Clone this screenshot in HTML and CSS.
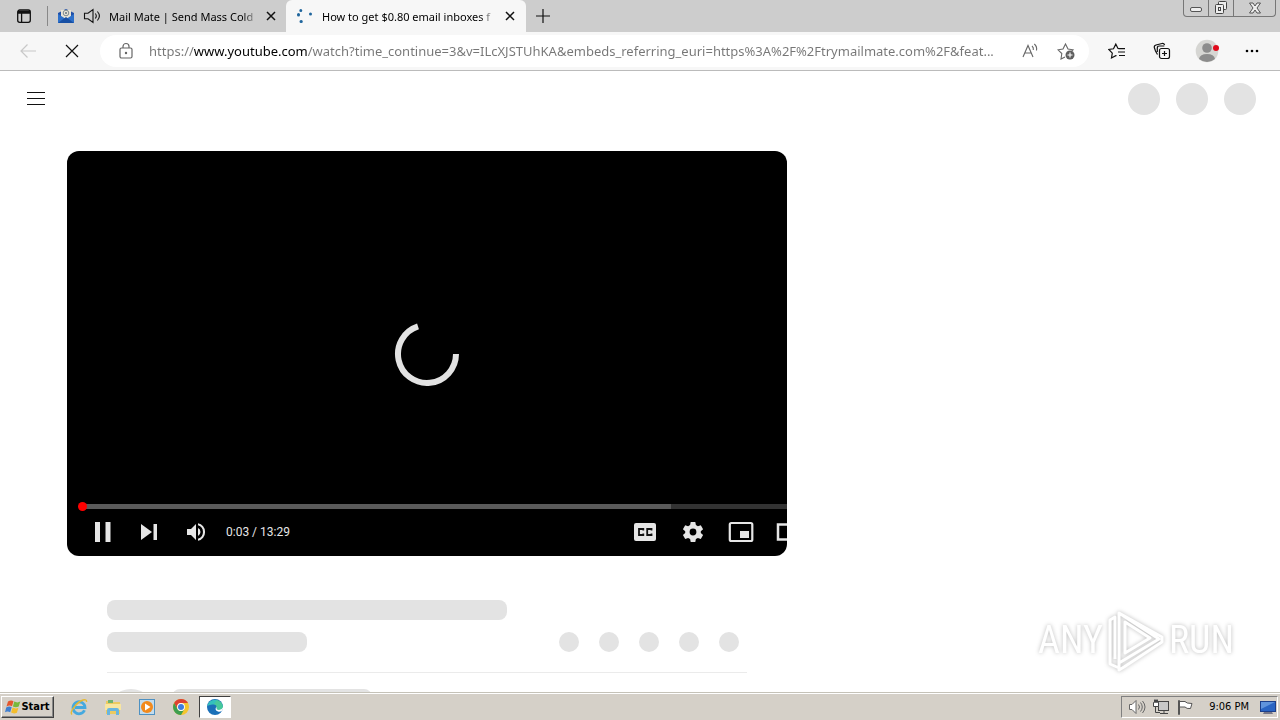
FILE: index.html
```
<!DOCTYPE html>
<html lang="en">

<head>
    <meta charset="UTF-8">
    <meta name="viewport" content="width=device-width, initial-scale=1.0">
    <title>How to get $0.80 email inboxes</title>
    <link rel="stylesheet" href="styles.css">
</head>

<body>
    <!-- Tab strip -->
    <header class="tabstrip">
        <button class="tab-actions" aria-label="Tab actions">
            <svg width="16" height="16" viewBox="0 0 16 16" fill="none" stroke="#111" stroke-width="1.3"><rect x="1.7" y="2" width="12.6" height="12.3" rx="2"/><path d="M2 3.5h12M2 5h12M5.6 5v9"/></svg>
        </button>
        <div class="tab">
            <svg width="18" height="18" viewBox="0 0 18 18"><path d="M1 6 9 2l8 4v10H1z" fill="#1f4fa8"/><path d="M4 3h10v8l-5 3-5-3z" fill="#e8e4d6"/><circle cx="9" cy="6" r="2.8" fill="none" stroke="#7c8990"/><circle cx="9" cy="6" r="1" fill="#64737c"/><path d="M1 7l8 5 8-5v9H1z" fill="#2d70ca"/><path d="M1 16l8-6 8 6z" fill="#174fa4"/></svg>
            <svg width="18" height="18" viewBox="0 0 18 18" fill="none" stroke="#111" stroke-width="1.1"><path d="M1.5 6.3H5L10 2.5v13L5 11.7H1.5zM12.3 6.5q2 2.5 0 5M14.4 4.5q4 4.500 0 9"/></svg>
            <span class="tab-title">Mail Mate | Send Mass Cold</span>
            <button class="tab-close" aria-label="Close tab"><svg width="10" height="10" viewBox="0 0 10 10" stroke="#111" stroke-width="1.5"><path d="M1 1l8 8M9 1L1 9"/></svg></button>
        </div>
        <div class="tab active">
            <svg width="18" height="18" viewBox="0 0 18 18" fill="none" stroke="#20669d" stroke-width="3" stroke-linecap="round"><path d="M4.800 3.500v.1M2.500 7.500v.6M5 14.500h.3M14.500 7v.1"/></svg>
            <span class="tab-title">How to get $0.80 email inboxes f</span>
            <button class="tab-close" aria-label="Close tab"><svg width="10" height="10" viewBox="0 0 10 10" stroke="#111" stroke-width="1.5"><path d="M1 1l8 8M9 1L1 9"/></svg></button>
        </div>
        <button class="new-tab" aria-label="New tab"><svg width="14" height="14" viewBox="0 0 14 14" stroke="#111" stroke-width="1.200"><path d="M7 0v14M0 7h14"/></svg></button>
        <div class="window-buttons">
            <button aria-label="Minimize"><svg width="14" height="14" viewBox="0 0 14 14" fill="#eee" stroke="#555"><rect x="1.500" y="6.500" width="11" height="4" rx="1.500"/></svg></button>
            <button aria-label="Restore"><svg width="14" height="14" viewBox="0 0 14 14" fill="#eee" stroke="#444"><rect x="4.500" y=".5" width="8" height="8" rx="1"/><rect x="1.500" y="3.500" width="8" height="9" rx="1"/><rect x="4.500" y="6.500" width="2" height="3"/></svg></button>
            <button class="window-close" aria-label="Close"><svg width="14" height="14" viewBox="0 0 14 14" fill="#eee" stroke="#555"><path d="M1.500 2h3.500l2 3 2-3h3.500L9 7l3.500 5H9L7 9l-2 3H1.500L5 7z"/></svg></button>
        </div>
    </header>

    <!-- Toolbar -->
    <nav class="toolbar">
        <button class="nav-button" aria-label="Back"><svg width="18" height="18" viewBox="0 0 18 18" fill="none" stroke="#c8c8c8" stroke-width="1.200"><path d="M17 9H2M8.500 2.500L2 9l6.500 6.500"/></svg></button>
        <button class="nav-button" aria-label="Stop"><svg width="14" height="14" viewBox="0 0 14 14" stroke="#111" stroke-width="1.200"><path d="M1 1l12 12M13 1L1 13"/></svg></button>
        <div class="address">
            <svg width="16" height="18" viewBox="0 0 16 18" fill="none" stroke="#666" stroke-width="1.200"><rect x="2" y="6" width="12" height="10" rx="1.500"/><path d="M5 6V4.500a3 3 0 0 1 6 0V6"/><circle cx="8" cy="11" r=".6" fill="#666"/></svg>
            <input class="url" type="text" aria-label="Address" value="https://www.youtube.com/watch?time_continue=3&amp;v=ILcXJSTUhKA&amp;embeds_referring_euri=https%3A%2F%2Ftrymailmate.com%2F&amp;feat...">
            <button class="icon-button" aria-label="Read aloud"><svg width="18" height="18" viewBox="0 0 18 18" fill="none" stroke="#666" stroke-width="1.100"><path d="M2 15L7 3.500 12 15M3.800 11h6.400M11 4q1.800 1.500 1.300 4M13.300 2q3 2.500 2.200 6.500"/></svg></button>
            <button class="icon-button" aria-label="Add to favorites"><svg width="18" height="18" viewBox="0 0 18 18" fill="none" stroke="#666" stroke-width="1.100"><path d="M8 15l-4 2 .8-5.500L1 7.800l5-.7L8.500 2l2.500 5.100 5 .7-1.500 1.500"/><circle cx="13" cy="13" r="4.500" fill="#5f5f5f" stroke="none"/><path d="M13 10.500v5M10.500 13h5" stroke="#fff"/></svg></button>
        </div>
        <div class="toolbar-actions">
            <button class="icon-button" aria-label="Favorites"><svg width="18" height="18" viewBox="0 0 18 18" fill="none" stroke="#111" stroke-width="1.200"><path d="M10.500 6.500H10L7.800 2.200 5.500 6.800l-4.700.7 3.500 3.700L3.500 16l4.300-2.300h.7M10.500 6.600H17M10 10h7M11 13.500h6"/></svg></button>
            <button class="icon-button" aria-label="Collections"><svg width="18" height="18" viewBox="0 0 18 18" fill="none" stroke="#111" stroke-width="1.200"><rect x="6.500" y="6.500" width="10" height="10" rx="2"/><path d="M11.500 9v5M9 11.500h5M4.500 12.500L2.500 9 1.300 5.500Q1 3.500 3 3l6-1.500q2-.3 2.600 1.500M4.300 10V6q0-2 2-2h5"/></svg></button>
            <button class="icon-button" aria-label="Profile"><svg width="24" height="24" viewBox="0 0 24 24"><circle cx="12" cy="12" r="11.300" fill="#d6d6d3"/><circle cx="12" cy="9" r="4.800" fill="#8c8c8c"/><path d="M4 20q1-5 8-5t8 5q-8 6-16 0z" fill="#8c8c8c"/><circle cx="21" cy="9" r="3" fill="#e00b1c"/></svg></button>
            <button class="icon-button" aria-label="Settings and more"><svg width="16" height="16" viewBox="0 0 16 16"><circle cx="3" cy="8" r="1.300"/><circle cx="8" cy="8" r="1.300"/><circle cx="13" cy="8" r="1.300"/></svg></button>
        </div>
    </nav>

    <!-- Page -->
    <main class="page">
        <div class="masthead">
            <button class="guide" aria-label="Guide"><svg width="18" height="14" viewBox="0 0 18 14" stroke="#111"><path d="M0 .5h18M0 6.500h18M0 12.500h18"/></svg></button>
            <div class="masthead-skeleton"><i></i><i></i><i></i></div>
        </div>

        <section class="watch">
            <div class="player">
                <div class="stage">
                    <svg width="66" height="66" viewBox="0 0 66 66" fill="none" stroke="#e2e2e2" stroke-width="6"><path d="M62 33A29 29 0 1 1 24 5.400"/></svg>
                </div>
                <input class="progress" type="range" min="0" max="809" value="3" aria-label="Seek">
                <div class="controls">
                    <button aria-label="Pause"><svg width="24" height="24" viewBox="0 0 24 24" fill="#e6e6e6"><path d="M4 2h5v20H4zM14.500 2h5v20h-5z"/></svg></button>
                    <button aria-label="Next"><svg width="24" height="24" viewBox="0 0 24 24" fill="#e6e6e6"><path d="M3 4l11 8-11 8zM15.500 4H19v16h-3.500z"/></svg></button>
                    <button aria-label="Mute"><svg width="24" height="24" viewBox="0 0 24 24"><path d="M2 9v6h4l5 5V4L6 9zM15.500 12A4.500 4.500 0 0 0 13 8v8a4.500 4.500 0 0 0 2.500-4zM13 3.200v2.100a7 7 0 0 1 0 13.400v2.100a9 9 0 0 0 0-17.600z" fill="#e6e6e6"/></svg></button>
                    <span class="time">0:03 / 13:29</span>
                    <div class="controls-right">
                        <button aria-label="Subtitles"><svg width="24" height="24" viewBox="0 0 24 24"><rect x="1" y="3" width="22" height="18" rx="2" fill="#e6e6e6"/><path d="M10.300 10.500V9H6v6h4.300v-1.500M18.500 10.500V9h-4.300v6h4.300v-1.500" fill="none" stroke="#111" stroke-width="1.800"/></svg></button>
                        <button aria-label="Settings"><svg width="24" height="24" viewBox="0 0 24 24" fill="#e6e6e6"><path fill-rule="evenodd" d="M9.700 2h4.600l.6 3 2 1.200 2.900-1 2.300 4-2.300 2v1.700l2.300 2-2.300 4-2.900-1-2 1.200-.6 3H9.700l-.6-3-2-1.200-2.900 1-2.300-4 2.300-2v-1.700l-2.300-2 2.300-4 2.900 1 2-1.200zM12 8.600a3.400 3.400 0 1 0 0 6.800 3.400 3.400 0 0 0 0-6.800z"/></svg></button>
                        <button aria-label="Miniplayer"><svg width="26" height="24" viewBox="0 0 26 24"><rect x="1.800" y="3" width="22.500" height="18" rx="1.500" fill="none" stroke="#e6e6e6" stroke-width="2.200"/><path d="M12 11h9v7h-9z" fill="#e6e6e6"/></svg></button>
                        <button aria-label="Theater mode"><svg width="26" height="24" viewBox="0 0 26 24" fill="none" stroke="#e6e6e6" stroke-width="2.500"><path d="M2 4.500h23v15H2z"/></svg></button>
                    </div>
                </div>
            </div>

            <div class="info">
                <div class="bar title-bar"></div>
                <div class="info-row">
                    <div class="bar"></div>
                    <div class="dots"><i></i><i></i><i></i><i></i><i></i></div>
                </div>
                <div class="owner">
                    <i class="avatar"></i>
                    <div class="bar"></div>
                </div>
            </div>
        </section>

        <div class="watermark">
            <span>ANY</span>
            <svg width="58" height="64" viewBox="0 0 58 64" fill="none" stroke="#fff" stroke-width="3" stroke-linejoin="round"><path d="M8 51V9l-5 3v44l9 4M12 5v50l40-24zM12 5l43 24v5L17 59l-5 3v-7M18 14v31l25-15z"/></svg>
            <span>RUN</span>
        </div>
    </main>

    <!-- Taskbar -->
    <footer class="taskbar">
        <button class="start">
            <svg width="16" height="16" viewBox="0 0 16 16"><path d="M3 2.500q3-2 5.500-.3L7 7.200Q4.500 5.800 1.500 7.500z" fill="#e4572e"/><path d="M9.300 2.600q3 1.600 6 0l-1.600 5q-3 1.500-5.800-.1z" fill="#78b83b"/><path d="M1.200 8.500q3-1.700 5.500-.3l-1.500 5q-2.700-1.500-5.200 0z" fill="#3f7fd0"/><path d="M7.600 8.600q3 1.500 5.800.1l-1.500 5q-3 1.500-5.800-.1z" fill="#f3bd2c"/></svg>
            Start
        </button>
        <div class="quick-launch">
            <button aria-label="Internet Explorer"><svg width="18" height="18" viewBox="0 0 18 18" fill="none"><path d="M14.500 12.200A6 6 0 1 1 15 9.500H5" stroke="#45a9df" stroke-width="2.800"/><path d="M2 16.500C-1 14 7 4 13 2q4-1 3.500 2" stroke="#e6b932" stroke-width="1.400"/></svg></button>
            <button aria-label="File Explorer"><svg width="18" height="18" viewBox="0 0 18 18"><path d="M2 3h5l1 1h8v12H2z" fill="#ecca60"/><path d="M4 2h5v3H4z" fill="#6fb36e"/><path d="M1 6h16v6H1z" fill="#f8e6a0"/><path d="M3 17v-5q0-2 2-2h8q2 0 2 2v5h-3v-4H6v4z" fill="#69b5df"/></svg></button>
            <button aria-label="Media Player"><svg width="18" height="18" viewBox="0 0 18 18"><rect x="1.500" y="1.500" width="15" height="15" fill="#c3dced" stroke="#4e91c2"/><circle cx="9" cy="9" r="6" fill="#f28a1d"/><path d="M7 5.500v7L12.500 9z" fill="#fff"/></svg></button>
            <button aria-label="Chrome"><svg width="18" height="18" viewBox="0 0 18 18"><circle cx="9" cy="9" r="8" fill="#f5c52d"/><path d="M2.100 5A8 8 0 0 1 16 5H9a4 4 0 0 0-3.500 6z" fill="#dd4133"/><path d="M2.100 5A8 8 0 0 0 9 17l3.500-6A4 4 0 0 1 5.500 11z" fill="#3d9e50"/><circle cx="9" cy="9" r="3.900" fill="#fff"/><circle cx="9" cy="9" r="3" fill="#3f7de0"/></svg></button>
            <button class="running" aria-label="Edge"><svg width="18" height="18" viewBox="0 0 18 18"><circle cx="9" cy="9" r="8" fill="#1b70b8"/><path d="M1.200 8A8 8 0 0 1 17 9q0 3-4 3-3 0-2.500-2 1-3-2.500-3.500Q4 6 1.200 8z" fill="#34c1bd"/><path d="M11 2a8 8 0 0 1 6 7q0 3-4 3-3 0-2.500-2Q11 7 8 6z" fill="#55cd86" opacity=".6"/><path d="M10.500 8.500Q8 12 12 13.500q2 .6 4-.7 1.500-1 1-3.500-1 2.700-4 2.700-3 0-2.500-3.500z" fill="#fff"/></svg></button>
        </div>
        <div class="tray">
            <svg width="18" height="18" viewBox="0 0 18 18" fill="#fff" stroke="#666"><path d="M1.500 6.500H4l4-4v13l-4-4H1.500z"/><path d="M10.500 6.500q2 2.500 0 5M12.500 4.500q3.500 4.500 0 9M14.500 3q5 6 0 12" fill="none"/></svg>
            <svg width="18" height="18" viewBox="0 0 18 18" fill="#c8c8c8" stroke="#444"><rect x="6.500" y="3.500" width="10" height="9"/><path d="M8 15.500h8M12 13v2M3.500 8v6.500H8" fill="none"/><path d="M2.500 1.500v3h-1v4h5v-4h-1v-3M3.500 1.500v3h1v-3" fill="#fff"/></svg>
            <svg width="18" height="18" viewBox="0 0 18 18" fill="#fff" stroke="#555"><path d="M2.500 16.500v-14h1v14zM3.500 3.500H9q1 2 7 2l-1.500 5q-4 .5-5.500-1.500H3.500z"/></svg>
            <time class="clock">9:06 PM</time>
            <svg width="16" height="16" viewBox="0 0 16 16"><path d="M0 2h16v11H0z" fill="#1c3f8a"/><path d="M1 3h14v9H1z" fill="#2a65c3"/><path d="M1 3h14L1 10z" fill="#6094dc"/><path d="M4 13h8l1 2H3z" fill="#778"/></svg>
        </div>
    </footer>
</body>

</html>
```
FILE: styles.css
```
* {
    box-sizing: border-box;
}

body {
    margin: 0;
    height: 100vh;
    display: flex;
    flex-direction: column;
    overflow: hidden;
    background-color: white;
    color: black;
    font-family: "Noto Sans", "Open Sans", sans-serif;
    font-size: 11px;
}

button {
    display: flex;
    align-items: center;
    justify-content: center;
    flex: none;
    padding: 0;
    border: none;
    background: none;
    color: inherit;
    font: inherit;
}

svg {
    display: block;
    flex: none;
}

i {
    display: block;
    flex: none;
    border-radius: 50%;
    background-color: #e3e3e3;
}

/* Tab strip */
.tabstrip {
    display: flex;
    height: 32px;
    flex: none;
    background-color: #cdcdcd;
}

.tab-actions {
    width: 48px;
    height: 32px;
    border-right: 1px solid #999;
    border-image: linear-gradient(transparent 20%, #888 20%, #888 80%, transparent 80%) 1;
}

.tab {
    display: flex;
    align-items: center;
    gap: 8px;
    width: 238px;
    padding: 0 10px 0 9px;
}

.tab.active {
    width: 240px;
    padding: 0 11px 0 10px;
    border-radius: 6px 6px 0 0;
    background-color: #f7f7f7;
}

.tab-title {
    flex: 1;
    overflow: hidden;
    white-space: nowrap;
    -webkit-mask-image: linear-gradient(to right, black 90%, transparent);
    mask-image: linear-gradient(to right, black 90%, transparent);
}

.new-tab {
    width: 34px;
}

.window-buttons {
    display: flex;
    height: 17px;
    margin: 0 4px 0 auto;
    border: 1px solid #777;
    border-top: none;
    border-radius: 0 0 4px 4px;
}

.window-buttons button {
    width: 25px;
    border-right: 1px solid #777;
}

.window-buttons .window-close {
    width: 41px;
    border-right: none;
}

/* Toolbar */
.toolbar {
    display: flex;
    align-items: center;
    height: 39px;
    flex: none;
    padding: 0 16px 0 6px;
    border-bottom: 1px solid #bbb;
    background-color: #f7f7f7;
}

.nav-button {
    width: 44px;
    height: 32px;
}

.address {
    display: flex;
    align-items: center;
    flex: 1;
    height: 32px;
    margin: 0 16px 0 6px;
    padding: 0 11px 0 18px;
    border-radius: 16px;
    background-color: white;
}

.url {
    flex: 1;
    min-width: 0;
    margin: 0 4px 0 15px;
    padding: 0;
    border: none;
    outline: none;
    font: 13px "Noto Sans", "Open Sans", sans-serif;
    /* host name is darker than the rest of the address */
    background: linear-gradient(to right, #767676 45px, black 45px, black 158px, #767676 158px);
    -webkit-background-clip: text;
    background-clip: text;
    -webkit-text-fill-color: transparent;
}

.icon-button {
    width: 24px;
    height: 24px;
}

.address .icon-button + .icon-button {
    margin-left: 12px;
}

.toolbar-actions {
    display: flex;
    gap: 21px;
}

/* Page */
.page {
    position: relative;
    flex: 1;
    min-height: 0;
    overflow: hidden;
}

.masthead {
    display: flex;
    align-items: center;
    justify-content: space-between;
    height: 56px;
    padding: 0 24px 0 16px;
}

.guide {
    width: 40px;
    height: 40px;
}

.masthead-skeleton {
    display: flex;
    gap: 16px;
}

.masthead-skeleton i {
    width: 32px;
    height: 32px;
}

.watch {
    max-width: 720px;
    margin: 24px 67px 0;
}

.player {
    display: flex;
    flex-direction: column;
    aspect-ratio: 16 / 9;
    padding-left: 12px;
    overflow: hidden;
    border-radius: 12px;
    background-color: black;
}

.stage {
    display: flex;
    align-items: center;
    justify-content: center;
    flex: 1;
    padding: 54px 12px 0 0;
}

.progress {
    appearance: none;
    -webkit-appearance: none;
    height: 9px;
    margin: 0 0 0 -4px;
    /* buffered part, then the rest of the track */
    background: linear-gradient(to right, #5a5a5a 592px, #333 592px) 4px center / 100% 5px no-repeat;
}

.progress::-webkit-slider-thumb {
    -webkit-appearance: none;
    width: 9px;
    height: 9px;
    border-radius: 50%;
    background-color: #f00;
}

.controls {
    display: flex;
    align-items: center;
    height: 45px;
    flex: none;
    padding-bottom: 4px;
}

.controls button {
    width: 47px;
    height: 40px;
}

.time {
    margin-left: 6px;
    color: #e6e6e6;
    font: 12px Roboto, sans-serif;
}

.controls-right {
    display: flex;
    margin: 0 -26px 0 auto;
}

.controls-right button {
    width: 48px;
}

.info {
    margin: 44px 40px 0;
}

.bar {
    width: 200px;
    height: 20px;
    border-radius: 8px;
    background-color: #e3e3e3;
}

.title-bar {
    width: 400px;
    margin-bottom: 12px;
}

.info-row {
    display: flex;
    justify-content: space-between;
    padding: 0 8px 20px 0;
    border-bottom: 1px solid #ebebeb;
}

.dots {
    display: flex;
    gap: 20px;
}

.dots i {
    width: 20px;
    height: 20px;
}

.owner {
    display: flex;
    gap: 17px;
    padding-top: 16px;
}

.avatar {
    width: 48px;
    height: 48px;
}

/* Watermark floats over the page */
.watermark {
    position: absolute;
    right: 46px;
    bottom: 20px;
    display: flex;
    align-items: center;
    gap: 4px;
    color: white;
    font: 38px "Roboto Condensed", "Liberation Sans Narrow", "DejaVu Sans Condensed", sans-serif;
    filter: drop-shadow(0 0 2px #bbb);
}

/* Taskbar */
.taskbar {
    display: flex;
    align-items: center;
    height: 28px;
    flex: none;
    padding: 0 2px 0 1px;
    border-top: 1px solid #c5c2b8;
    box-shadow: inset 0 1px white;
    background-color: #d5d0c8;
    font: 11px "DejaVu Sans Condensed", "DejaVu Sans", sans-serif;
}

.start {
    width: 53px;
    height: 22px;
    border: 1px solid;
    border-color: white #404040 #404040 white;
    box-shadow: inset -1px -1px #888;
    font-weight: bold;
}

.quick-launch {
    display: flex;
    margin-left: 8px;
}

.quick-launch button {
    width: 34px;
    height: 22px;
}

.quick-launch .running {
    width: 32px;
    margin-left: 1px;
    border: 1px solid;
    border-color: #404040 white white #404040;
    background-color: white;
}

.tray {
    display: flex;
    align-items: center;
    gap: 6px;
    height: 22px;
    margin-left: auto;
    padding: 0 1px 0 6px;
    border: 1px solid;
    border-color: #808080 white white #808080;
}

.clock {
    margin: 0 5px 0 9px;
}
```
